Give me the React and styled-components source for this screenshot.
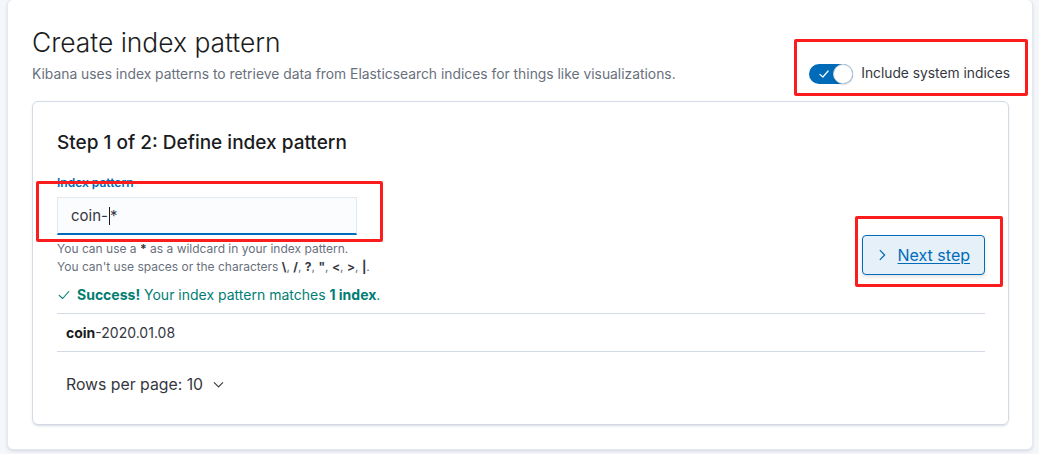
import React from 'react';
import styled, { createGlobalStyle } from 'styled-components';

const GlobalStyle = createGlobalStyle`
  html, body {
    margin: 0;
    padding: 0;
    background: #f5f7fa;
  }
  body {
    font-family: Inter, "Noto Sans", sans-serif;
    color: #343741;
    -webkit-font-smoothing: antialiased;
  }
  * { box-sizing: border-box; }
`;

const Page = styled.div`
  position: relative;
  width: 1039px;
  height: 454px;
  overflow: hidden;
  padding: 0 6px 0 7px;
`;

const OuterPanel = styled.section`
  margin-top: -1px;
  background: #fff;
  border: 1px solid #e3e8f2;
  border-radius: 6px;
  box-shadow: 0 1px 2px rgba(152, 162, 179, 0.2), 0 2px 4px rgba(152, 162, 179, 0.15);
  padding: 24px 23px 24px 24px;
`;

const Header = styled.header`
  display: flex;
  justify-content: space-between;
  align-items: flex-end;
`;

const Title = styled.h1`
  margin: 0;
  font-size: 26.4px;
  line-height: 36px;
  font-weight: 300;
  color: #1a1c21;
`;

const Subtitle = styled.p`
  margin: 4px 0 0;
  font-size: 13.85px;
  line-height: 21px;
  color: #69707d;
`;

const SwitchRow = styled.label`
  display: flex;
  align-items: center;
  gap: 8px;
  margin-bottom: 1px;
  margin-right: -1px;
  font-size: 13.8px;
  line-height: 21px;
  color: #343741;
`;

const Track = styled.span`
  display: flex;
  align-items: center;
  justify-content: space-between;
  width: 44px;
  height: 20px;
  border-radius: 10px;
  background: #006bb8;
  padding-left: 9px;
`;

const Thumb = styled.span`
  width: 20px;
  height: 20px;
  border-radius: 50%;
  background: #fff;
  border: 1px solid #c9d1dc;
  box-shadow: 0 1px 2px rgba(0, 0, 0, 0.15);
`;

const StepPanel = styled.div`
  margin-top: 16px;
  background: #fff;
  border: 1px solid #d3dae6;
  border-radius: 6px;
  box-shadow: 0 2px 2px -1px rgba(152, 162, 179, 0.3), 0 1px 5px -2px rgba(152, 162, 179, 0.3);
  padding: 24px 23px 24px 24px;
`;

const StepTitle = styled.h2`
  margin: 3px 0 0;
  font-size: 19px;
  line-height: 28px;
  font-weight: 500;
  color: #1a1c21;
`;

const FormRow = styled.div`
  display: flex;
  justify-content: space-between;
  align-items: flex-end;
  margin-top: 17px;
`;

const Field = styled.div`
  display: flex;
  flex-direction: column;
`;

const Label = styled.label`
  font-size: 12px;
  line-height: 18px;
  font-weight: 600;
  color: #006bb8;
  margin-bottom: 5px;
`;

const TextBox = styled.div`
  display: flex;
  align-items: center;
  width: 300px;
  height: 38px;
  padding: 0 13px;
  background: #fbfcfd;
  border: 1px solid #e3e8f0;
  border-bottom: 2px solid #006bb8;
  font-size: 15px;
  color: #343741;
`;

const Caret = styled.span`
  display: inline-block;
  width: 1px;
  height: 18px;
  background: #1a1c21;
  margin: 0 0 0 1px;
`;

const Help = styled.div`
  margin-top: 5px;
  font-size: 12px;
  line-height: 18px;
  color: #69707d;
  b { color: #343741; font-weight: 700; }
`;

const NextButton = styled.button`
  display: inline-flex;
  align-items: center;
  gap: 9px;
  height: 40px;
  padding: 0 14px 0 12px;
  margin-bottom: 1px;
  border: 1px solid #006bb8;
  border-radius: 4px;
  background: #e6f0f8;
  color: #006bb8;
  font-family: Inter, "Noto Sans", sans-serif;
  font-size: 16px;
  font-weight: 400;
  box-shadow: 0 2px 4px rgba(0, 0, 0, 0.12);
  cursor: pointer;
  span { text-decoration: underline; text-underline-offset: 2px; }
`;

const Success = styled.div`
  display: flex;
  align-items: center;
  gap: 6px;
  margin-top: 8px;
  font-size: 14px;
  line-height: 21px;
  color: #017d73;
  b { font-weight: 700; }
`;

const Row = styled.div`
  display: flex;
  align-items: center;
  height: 39px;
  padding: 0 9px;
  margin-top: 8px;
  border-top: 1px solid #d3dae6;
  border-bottom: 1px solid #d3dae6;
  font-size: 14px;
  color: #343741;
  b { font-weight: 700; color: #1a1c21; }
`;

const Pager = styled.div`
  display: flex;
  align-items: center;
  gap: 9px;
  height: 32px;
  margin-top: 16px;
  padding-left: 9px;
  font-size: 15.8px;
  color: #343741;
`;

const Annotation = styled.div`
  position: absolute;
  border: 3px solid #fb1d1d;
  border-radius: 2px;
  pointer-events: none;
`;

const Check = ({ color, size = 12, width = 1.5 }) => (
  <svg width={size} height={size} viewBox="0 0 16 16" fill="none">
    <polyline points="2.5,8.5 6.5,12 13.5,4" stroke={color} strokeWidth={width} strokeLinecap="round" strokeLinejoin="round" />
  </svg>
);

const Chevron = ({ dir = 'right', color = 'currentColor', size = 12 }) => (
  <svg width={size} height={size} viewBox="0 0 16 16" fill="none">
    {dir === 'right' ? (
      <polyline points="5.5,2.5 11,8 5.5,13.5" stroke={color} strokeWidth="1.4" strokeLinejoin="round" />
    ) : (
      <polyline points="2.5,5.5 8,11 13.5,5.5" stroke={color} strokeWidth="1.4" strokeLinejoin="round" />
    )}
  </svg>
);

export default function App() {
  return (
    <Page>
      <GlobalStyle />
      <OuterPanel>
        <Header>
          <div>
            <Title>Create index pattern</Title>
            <Subtitle>
              Kibana uses index patterns to retrieve data from Elasticsearch indices for things like visualizations.
            </Subtitle>
          </div>
          <SwitchRow>
            <Track>
              <Check color="#fff" size={12} width={1.6} />
              <Thumb />
            </Track>
            Include system indices
          </SwitchRow>
        </Header>

        <StepPanel>
          <StepTitle>Step 1 of 2: Define index pattern</StepTitle>
          <FormRow>
            <Field>
              <Label>Index pattern</Label>
              <TextBox role="textbox">
                coin-<Caret />*
              </TextBox>
              <Help>
                You can use a <b>*</b> as a wildcard in your index pattern.
                <br />
                You can't use spaces or the characters <b>\</b>, <b>/</b>, <b>?</b>, <b>"</b>, <b>&lt;</b>, <b>&gt;</b>, <b>|</b>.
              </Help>
            </Field>
            <NextButton>
              <Chevron dir="right" size={14} />
              <span>Next step</span>
            </NextButton>
          </FormRow>
          <Success>
            <Check color="#017d73" size={14} width={1.3} />
            <div>
              <b>Success!</b> Your index pattern matches <b>1 index</b>.
            </div>
          </Success>
          <Row>
            <b>coin</b>-2020.01.08
          </Row>
          <Pager>
            Rows per page: 10
            <Chevron dir="down" size={13} color="#343741" />
          </Pager>
        </StepPanel>
      </OuterPanel>

      <Annotation style={{ left: 794, top: 39, width: 234, height: 57 }} />
      <Annotation style={{ left: 36, top: 181, width: 347, height: 61 }} />
      <Annotation style={{ left: 855, top: 216, width: 148, height: 71 }} />
    </Page>
  );
}
